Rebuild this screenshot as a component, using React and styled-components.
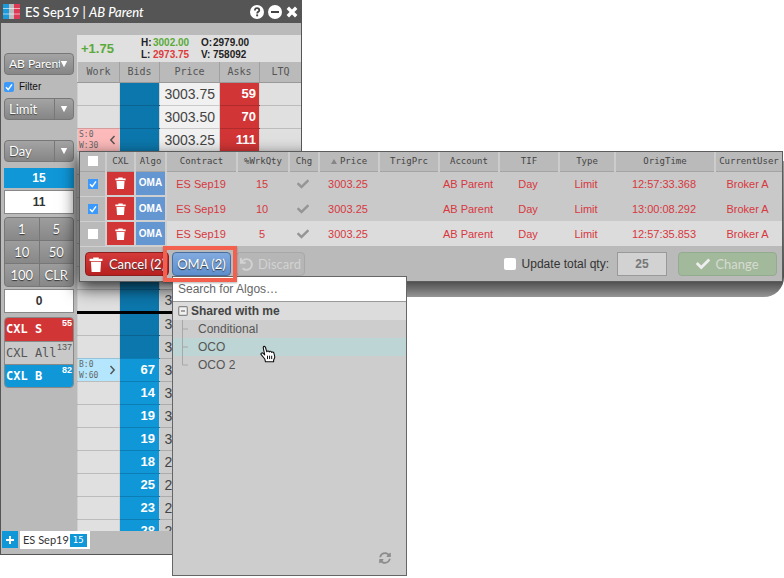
import React from "react";
import styled, { createGlobalStyle } from "styled-components";
import { FaCheck, FaUndo, FaSyncAlt } from "react-icons/fa";

const sans = '"Liberation Sans", Arial, sans-serif';
const human = 'Lato, "Open Sans", sans-serif';
const mono = '"DejaVu Sans Mono", "Liberation Mono", monospace';

const Global = createGlobalStyle`
  *, *::before, *::after { box-sizing: border-box; }
  body { margin: 0; background: #fff; overflow: hidden; font-family: ${sans}; }
  button, input, select { margin: 0; padding: 0; border: 0; border-radius: 0; font: inherit; color: inherit; }
  button { cursor: pointer; }
  table { border-collapse: collapse; border-spacing: 0; }
  th, td { padding: 0; }
`;

const Desktop = styled.main`
  position: relative;
  min-height: 100vh;
`;

/* ---------- trading window ---------- */

const Window = styled.section`
  position: relative;
  width: 302px;
  max-width: 100%;
  overflow: hidden;
  background: #bababa;
  border: 1px solid #555;
  border-top: 0;
`;

const WindowShade = styled.div`
  position: absolute;
  left: 78px;
  right: -40px;
  top: 153px;
  height: 127px;
  box-shadow: 0 6px 16px 2px rgba(0, 0, 0, 0.8);
`;

const TitleBar = styled.header`
  display: flex;
  align-items: center;
  height: 23px;
  padding: 0 3px 0 2px;
  background: #555;
  color: #fff;
`;

const Title = styled.h1`
  flex: 1;
  margin: 0 0 0 5px;
  font: 500 13px/20px ${human};
`;

const TitleButton = styled.button`
  display: flex;
  margin-left: 4px;
  background: none;
  color: #fff;
`;

const Body = styled.div`
  display: flex;
  padding-top: 12px;
`;

const Sidebar = styled.div`
  display: flex;
  flex-direction: column;
  width: 76px;
  padding: 18px 3px 0;
`;

const SelectBox = styled.span`
  position: relative;
  display: block;
  height: 22px;
  margin-bottom: ${(p) => p.$after}px;
  border: 1px solid #777;
  border-radius: 4px;
  background: linear-gradient(#a4a4a4, #868686);
  color: #fff;

  select {
    width: ${(p) => (p.$split ? 50 : 55)}px;
    height: 20px;
    padding-left: 4px;
    overflow: hidden;
    appearance: none;
    background: none;
    border-right: ${(p) => (p.$split ? "1px solid #777" : "0")};
    font: ${(p) => (p.$split ? 13 : 12)}px/20px ${human};
    text-overflow: clip;
    text-shadow: 0 1px 1px #444;
  }

  svg {
    position: absolute;
    right: 5px;
    top: 6px;
    pointer-events: none;
  }
`;

const Tick = styled.input`
  appearance: none;
  flex: none;
  display: block;
  width: ${(p) => p.$size}px;
  height: ${(p) => p.$size}px;
  border-radius: ${(p) => (p.$round ? 2 : 0)}px;
  background: #fff;

  &:checked {
    background: #3b99fc
      url("data:image/svg+xml,%3Csvg xmlns='http://www.w3.org/2000/svg' viewBox='0 0 10 10'%3E%3Cpath d='M2 5.3 4.2 7.6 8 2.4' fill='none' stroke='white' stroke-width='1.4'/%3E%3C/svg%3E")
      center / 100% 100%;
  }
`;

const FilterLabel = styled.label`
  display: flex;
  align-items: center;
  gap: 5px;
  height: 12px;
  margin-bottom: 5px;
  font: 10px/12px ${sans};
  color: #111;
`;

const QtyField = styled.input`
  width: 100%;
  height: ${(p) => (p.$active ? 20 : 24)}px;
  margin-bottom: ${(p) => p.$after}px;
  border: ${(p) => (p.$active ? "0" : "1px solid #888")};
  background: ${(p) => (p.$active ? "#1097d8" : "#fff")};
  color: ${(p) => (p.$active ? "#fff" : "#333")};
  font: bold 12px/18px ${sans};
  text-align: center;
`;

const Keypad = styled.div`
  display: grid;
  grid-template-columns: 1fr 1fr;
  gap: 1px;
  margin-bottom: 2px;
  overflow: hidden;
  border: 1px solid #777;
  border-radius: 4px;
  background: #777;
`;

const Key = styled.button`
  height: 22px;
  background: linear-gradient(#9d9d9d, #888);
  color: #fff;
  font: 13px/20px ${human};
  text-shadow: 0 1px 1px #333;
`;

const CancelStack = styled.div`
  overflow: hidden;
  margin-top: 4px;
  border: 1px solid #888;
  border-radius: 4px;
`;

const CancelKey = styled.button`
  display: flex;
  justify-content: space-between;
  width: 100%;
  height: 23px;
  padding: 1px 1px 0 1px;
  background: ${(p) => p.$bg};
  color: ${(p) => p.$fg};
  font: ${(p) => p.$weight} 12px/20px ${mono};
  text-align: left;
  white-space: nowrap;

  & + & { border-top: 1px solid #888; }

  sup { font: ${(p) => p.$weight} 9px/9px ${sans}; vertical-align: top; }
`;

const Ladder = styled.div`
  flex: 1;
  height: 496px;
  overflow: hidden;
  background: #e0e0e0;
`;

const Quote = styled.div`
  display: flex;
  align-items: center;
  height: 27px;
  padding-left: 4px;
`;

const Change = styled.strong`
  width: 60px;
  color: #5aaa3a;
  font: bold 13px/20px ${sans};
`;

const QuoteGrid = styled.dl`
  display: grid;
  grid-template-columns: 12px 48px 12px auto;
  margin: 0;
  font: bold 10px/12px ${sans};
  color: #222;

  dd { margin: 0; }
`;

const QuoteValue = styled.dd`
  color: ${(p) => p.$color || "#222"};
`;

const LadderTable = styled.table`
  width: 100%;
  table-layout: fixed;
`;

const LadderHead = styled.th`
  width: ${(p) => p.$w}px;
  height: 20px;
  border-left: 1px solid #d6d6d6;
  border-right: 1px solid #a0a0a0;
  border-bottom: 1px solid #999;
  background: #bababa;
  color: #555;
  font: 10px/18px ${mono};
`;

const tones = {
  bidDark: "#0c77ac",
  bid: "#1097d8",
  ask: "#d23535",
  price: "#f1f1f1",
  priceDim: "#cdcdcd",
  plain: "#e0e0e0",
  sell: "#fdbaba",
  buy: "#b4e6fd",
};

const LadderCell = styled.td`
  height: 23px;
  padding: 0 ${(p) => p.$pad || 0}px;
  border-bottom: ${(p) => (p.$mid ? "3px solid #000" : "1px solid rgba(0,0,0,.16)")};
  border-left: 1px solid #d0d0d0;
  background: ${(p) => tones[p.$tone]};
  color: ${(p) => (p.$strong ? "#fff" : "#444")};
  font: ${(p) => (p.$strong ? "bold 13px" : "14px")}/20px ${sans};
  text-align: right;
  white-space: nowrap;
`;

const WorkCell = styled.div`
  display: flex;
  align-items: center;
  justify-content: space-between;
  padding-right: 2px;
  color: #666;
  font: 8px/11px ${mono};
  text-align: left;
`;

const TabBar = styled.footer`
  display: flex;
  gap: 2px;
  height: 23px;
  padding-left: 1px;
  align-items: flex-start;
`;

const AddTab = styled.button`
  display: grid;
  place-items: center;
  width: 16px;
  height: 17px;
  background: #1097d8;
`;

const Tab = styled.button`
  display: flex;
  align-items: center;
  gap: 1px;
  height: 18px;
  padding: 0 3px;
  background: #fff;
  color: #333;
  font: 11px/16px ${human};
`;

const TabCount = styled.span`
  padding: 0 3px;
  background: #1097d8;
  color: #fff;
  font: 9px/13px ${mono};
`;

/* ---------- order book dialog ---------- */

const Dialog = styled.section`
  position: absolute;
  left: 79px;
  right: 1px;
  top: 151px;
  isolation: isolate;

  &::before {
    content: "";
    position: absolute;
    z-index: -1;
    left: 223px;
    right: -1px;
    top: 10px;
    bottom: -15px;
    border-bottom-right-radius: 20px;
    background: linear-gradient(#999 0, #777 60px, #4c4c4c 120px, #969696 100%);
  }
`;

const Panel = styled.div`
  border: 1px solid #5c5c5c;
  background: #bababa;
`;

const OrderTable = styled.table`
  width: 100%;
  table-layout: fixed;
`;

const OrderHead = styled.th`
  width: ${(p) => p.$w}px;
  height: 19px;
  border-right: 2px solid #ccc;
  border-bottom: 1px solid #a4a4a4;
  background: #bababa;
  color: #444;
  font: 9px/18px ${mono};
  white-space: nowrap;

  &:last-child { border-right: 0; }
  ${Tick} { margin: 0 auto; }
  svg { margin-right: 3px; }
`;

const OrderRow = styled.tr`
  background: ${(p) => (p.$selected ? "#c9c9c9" : "#dcdcdc")};
`;

const OrderCell = styled.td`
  height: 25px;
  padding-right: 2px;
  color: #d8373e;
  font: 11px/20px ${sans};
  text-align: center;
  white-space: nowrap;

  svg { display: block; margin: 0 auto; }
`;

const PickCell = styled(OrderCell)`
  padding: 0;
  border-right: 2px solid #d0d0d0;
  border-bottom: 1px solid #d0d0d0;
  background: #bababa;
  ${Tick} { margin: 0 auto; }
`;

const ActionCell = styled(OrderCell)`
  padding: 0;
  border-right: 2px solid #d0d0d0;
  border-bottom: 2px solid #d0d0d0;
  background: ${(p) => p.$bg};
`;

const CellButton = styled.button`
  display: block;
  width: 100%;
  background: none;
  color: #fff;
  font: bold 10px/20px ${sans};
`;

const Actions = styled.div`
  display: flex;
  align-items: center;
  height: 34px;
  padding: 0 5px;
`;

const ActionButton = styled.button`
  display: flex;
  align-items: center;
  gap: ${(p) => p.$gap || 0}px;
  justify-content: center;
  width: ${(p) => p.$w}px;
  height: 24px;
  border: 1px solid ${(p) => p.$edge};
  border-radius: 4px;
  background: ${(p) => p.$bg};
  color: ${(p) => p.$fg || "#fff"};
  font: 13px/20px ${human};
  text-shadow: ${(p) => (p.disabled ? "none" : "0 1px 1px #333")};
  white-space: nowrap;
`;

const AlgoPicker = styled.div`
  position: relative;
  z-index: 1;
  margin: 0 5px 0 3px;
`;

const Highlight = styled.div`
  position: absolute;
  z-index: 2;
  inset: -6px -6px -6px -9px;
  border: 4px solid #f4604e;
  box-shadow: 0 1px 2px rgba(0, 0, 0, 0.3);
  pointer-events: none;
`;

const UpdateLabel = styled.label`
  display: flex;
  align-items: center;
  gap: 6px;
  margin-left: auto;
  color: #333;
  font: 12px/20px ${sans};
`;

const TotalQty = styled.input`
  width: 50px;
  height: 24px;
  margin: 0 11px 0 8px;
  border: 1px solid #999;
  background: #d2d2d2;
  color: #777;
  font: bold 12px/20px ${sans};
  text-align: center;
`;

/* ---------- algo menu ---------- */

const Menu = styled.div`
  position: absolute;
  left: 0;
  top: 24px;
  display: flex;
  flex-direction: column;
  width: 235px;
  height: 300px;
  border: 1px solid #666;
  background: #cdcdcd;
  color: #555;
  font: 12px/18px ${sans};
`;

const Search = styled.input`
  height: 25px;
  padding-left: 5px;
  border-bottom: 1px solid #999;
  background: #fff;
  outline: 0;

  &::placeholder { color: #666; opacity: 1; }
`;

const Group = styled.button`
  display: flex;
  align-items: center;
  gap: 3px;
  height: 18px;
  padding-left: 5px;
  background: #dcdcdc;
  color: #444;
  font-weight: bold;
`;

const Tree = styled.ul`
  flex: 1;
  margin: 0;
  padding: 0;
  list-style: none;
`;

const Leaf = styled.button`
  display: flex;
  align-items: center;
  gap: 10px;
  width: 100%;
  height: 18px;
  padding-left: 9px;
  background: ${(p) => (p.$hover ? "#bdd5d4" : "none")};
  color: #555;
`;

const Refresh = styled.button`
  display: flex;
  align-self: flex-end;
  margin: 0 15px 11px 0;
  background: none;
  color: #8c8c8c;
`;

const Pointer = styled.svg`
  position: absolute;
  left: 87px;
  top: 68px;
`;

/* ---------- icons ---------- */

const Logo = () => (
  <svg width="17" height="17" viewBox="0 0 17 17" aria-hidden="true">
    <rect y="1" width="6" height="15" fill="#1a9bdc" />
    <rect x="6" y="1" width="5" height="15" fill="#bcbcbc" />
    <rect x="11" y="1" width="6" height="15" fill="#dc3a56" />
    <path d="M0 5.5h17M0 11h17" stroke="#fff" opacity=".6" />
  </svg>
);

const HelpIcon = () => (
  <svg width="14" height="14" viewBox="0 0 14 14">
    <circle cx="7" cy="7" r="7" fill="#fff" />
    <path d="M4.8 5.4C4.8 4 5.7 3.2 7 3.2s2.3.8 2.3 2c0 1.6-2.1 1.6-2.1 3.2" fill="none" stroke="#444" strokeWidth="1.8" />
    <rect x="6.2" y="9.4" width="1.9" height="1.9" fill="#444" />
  </svg>
);
const MinusIcon = () => (
  <svg width="14" height="14" viewBox="0 0 14 14">
    <circle cx="7" cy="7" r="7" fill="#fff" />
    <rect x="3" y="6" width="8" height="2" fill="#444" />
  </svg>
);
const CloseIcon = () => (
  <svg width="12" height="12" viewBox="0 0 12 12">
    <path d="m1.8 1.8 8.4 8.4m0-8.4-8.4 8.4" stroke="#fff" strokeWidth="3.4" />
  </svg>
);
const Arrow = () => (
  <svg width="8" height="8" viewBox="0 0 8 8" aria-hidden="true">
    <path d="M.8 1h6.4L4 7.2z" fill="#fff" />
  </svg>
);
const SortUp = () => (
  <svg width="6" height="5" viewBox="0 0 6 5" aria-hidden="true">
    <path d="M0 5h6L3 0z" fill="#858585" />
  </svg>
);
const Trash = ({ size = 12 }) => (
  <svg width={size - 1} height={size} viewBox="0 0 12 13" aria-hidden="true">
    <path d="M.4 1.6h3.2V.4h4.8v1.2h3.2v1.9H.4zM1.6 4.2h8.8L9.8 13H2.2z" fill="#fff" />
  </svg>
);
const Chevron = ({ left }) => (
  <svg width="7" height="10" viewBox="0 0 7 10" aria-hidden="true">
    <path d={left ? "M5.5 1 1.8 5l3.7 4" : "M1.5 1l3.7 4-3.7 4"} fill="none" stroke="#555" strokeWidth="1.5" />
  </svg>
);
const Collapse = () => (
  <svg width="10" height="10" viewBox="0 0 10 10" aria-hidden="true">
    <rect x=".7" y=".7" width="8.6" height="8.6" rx="1" fill="#f0f0f0" stroke="#888" strokeWidth="1.2" />
    <path d="M3 5h4" stroke="#555" />
  </svg>
);
const Branch = ({ last }) => (
  <svg width="6" height="18" viewBox="0 0 6 18" aria-hidden="true">
    <path d={last ? "M.5 0v9H6" : "M.5 0v18M.5 9H6"} fill="none" stroke="#a8a8a8" />
  </svg>
);
const Hand = () => (
  <Pointer width="17" height="18" viewBox="0 0 17 18" aria-hidden="true">
    <path
      d="M5.5 16.8 4.8 14 1.2 9.7C.4 8.3 2 7.3 3.2 8.4l1.5 1.4L3.3 3C3 1.1 5 .8 5.5 2.5l1.3 4.3c.2-1.1 2.1-1.1 2.4.1.5-1 2.2-.8 2.4.5.8-.8 2.3-.3 2.4 1l.7 3.1c.3 1.8-.9 2.6-1.1 3.8v1.5z"
      fill="#fff" stroke="#111" strokeWidth="1.1" strokeLinejoin="round"
    />
    <path d="M7.5 10.7v3.4M9.6 10.7v3.4M11.7 10.7v3.4" stroke="#111" />
  </Pointer>
);

/* ---------- data ---------- */

const asks = ["59", "70", "111"];
const bids = { 12: "67", 13: "14", 14: "19", 15: "19", 16: "18", 17: "25", 18: "23", 19: "28" };
const rows = Array.from({ length: 20 }, (_, i) => ({
  i,
  price: i > 2 && i < 9 ? "" : (3003.75 - i * 0.25).toFixed(2),
  ask: asks[i] || "",
  bid: bids[i] || "",
}));

const columns = [
  ["CXL", 29], ["Algo", 31], ["Contract", 71], ["%WrkQty", 52], ["Chg", 30], ["Price", 60],
  ["TrigPrc", 60], ["Account", 60], ["TIF", 60], ["Type", 56], ["OrigTime", 100], ["CurrentUser", 67],
];

const orders = [
  { qty: 15, time: "12:57:33.368", on: true },
  { qty: 10, time: "13:00:08.292", on: true },
  { qty: 5, time: "12:57:35.853", on: false },
];

const Picker = ({ label, value, split, after }) => (
  <SelectBox $split={split} $after={after}>
    <select aria-label={label} defaultValue={value}>
      <option>{value}</option>
    </select>
    <Arrow />
  </SelectBox>
);

const Working = ({ side, qty, left }) => (
  <WorkCell>
    <span>{side}<br />{qty}</span>
    <Chevron left={left} />
  </WorkCell>
);

function TradingWindow() {
  return (
    <Window>
      <TitleBar>
        <Logo />
        <Title>ES Sep19 | <em>AB Parent</em></Title>
        <TitleButton aria-label="Help"><HelpIcon /></TitleButton>
        <TitleButton aria-label="Minimize"><MinusIcon /></TitleButton>
        <TitleButton aria-label="Close"><CloseIcon /></TitleButton>
      </TitleBar>
      <Body>
        <Sidebar>
          <Picker label="Account" value="AB Parent" after={6} />
          <FilterLabel><Tick type="checkbox" defaultChecked $size={10} $round />Filter</FilterLabel>
          <Picker label="Order type" value="Limit" split after={20} />
          <Picker label="Time in force" value="Day" split after={6} />
          <QtyField aria-label="Position" defaultValue="15" $active $after={2} />
          <QtyField aria-label="Quantity" defaultValue="11" $after={3} />
          <Keypad>
            {["1", "5", "10", "50", "100", "CLR"].map((k) => <Key key={k}>{k}</Key>)}
          </Keypad>
          <QtyField aria-label="Disclosed quantity" defaultValue="0" $after={0} />
          <CancelStack>
            <CancelKey $bg="#d23535" $fg="#fff" $weight="bold">CXL S<sup>55</sup></CancelKey>
            <CancelKey $bg="#c9c9c9" $fg="#555" $weight="normal">CXL All<sup>137</sup></CancelKey>
            <CancelKey $bg="#1097d8" $fg="#fff" $weight="bold">CXL B<sup>82</sup></CancelKey>
          </CancelStack>
        </Sidebar>
        <Ladder>
          <Quote>
            <Change>+1.75</Change>
            <QuoteGrid>
              <dt>H:</dt><QuoteValue $color="#5aaa3a">3002.00</QuoteValue>
              <dt>O:</dt><QuoteValue>2979.00</QuoteValue>
              <dt>L:</dt><QuoteValue $color="#dc3c3c">2973.75</QuoteValue>
              <dt>V:</dt><QuoteValue>758092</QuoteValue>
            </QuoteGrid>
          </Quote>
          <LadderTable>
            <thead>
              <tr>
                <LadderHead $w={42}>Work</LadderHead>
                <LadderHead $w={40}>Bids</LadderHead>
                <LadderHead $w={60}>Price</LadderHead>
                <LadderHead $w={40}>Asks</LadderHead>
                <LadderHead $w={42}>LTQ</LadderHead>
              </tr>
            </thead>
            <tbody>
              {rows.map(({ i, price, ask, bid }) => (
                <tr key={i}>
                  <LadderCell $mid={i === 9} $pad={1} $tone={i === 2 ? "sell" : i === 12 ? "buy" : "plain"}>
                    {i === 2 && <Working side="S:0" qty="W:30" left />}
                    {i === 12 && <Working side="B:0" qty="W:60" />}
                  </LadderCell>
                  <LadderCell $mid={i === 9} $strong $pad={4} $tone={bid ? "bid" : "bidDark"}>{bid}</LadderCell>
                  <LadderCell $mid={i === 9} $pad={4} $tone={i < 9 ? "price" : "priceDim"}>{price}</LadderCell>
                  <LadderCell $mid={i === 9} $strong $pad={3} $tone="ask">{ask}</LadderCell>
                  <LadderCell $mid={i === 9} $tone="plain" />
                </tr>
              ))}
            </tbody>
          </LadderTable>
        </Ladder>
      </Body>
      <TabBar>
        <AddTab aria-label="Add tab">
          <svg width="8" height="8" viewBox="0 0 8 8"><path d="M4 0v8M0 4h8" stroke="#fff" strokeWidth="2" /></svg>
        </AddTab>
        <Tab>ES Sep19<TabCount>15</TabCount></Tab>
      </TabBar>
      <WindowShade />
    </Window>
  );
}

function AlgoMenu() {
  return (
    <Menu>
      <Search aria-label="Search for Algos" placeholder="Search for Algos…" />
      <Group><Collapse />Shared with me</Group>
      <Tree>
        <li><Leaf><Branch />Conditional</Leaf></li>
        <li><Leaf $hover><Branch />OCO</Leaf></li>
        <li><Leaf><Branch last />OCO 2</Leaf></li>
      </Tree>
      <Refresh aria-label="Refresh"><FaSyncAlt size={12} /></Refresh>
      <Hand />
    </Menu>
  );
}

function OrderDialog() {
  return (
    <Dialog>
      <Panel>
        <OrderTable>
          <thead>
            <tr>
              <OrderHead $w={26}><Tick type="checkbox" aria-label="Select all" $size={10} /></OrderHead>
              {columns.map(([name, w]) => (
                <OrderHead key={name} $w={w}>{name === "Price" && <SortUp />}{name}</OrderHead>
              ))}
            </tr>
          </thead>
          <tbody>
            {orders.map((o) => (
              <OrderRow key={o.time} $selected={o.on}>
                <PickCell><Tick type="checkbox" aria-label={`Select order ${o.time}`} defaultChecked={o.on} $size={10} /></PickCell>
                <ActionCell $bg="#d23535"><CellButton aria-label="Cancel order"><Trash /></CellButton></ActionCell>
                <ActionCell $bg="#6496d2"><CellButton>OMA</CellButton></ActionCell>
                <OrderCell>ES Sep19</OrderCell>
                <OrderCell>{o.qty}</OrderCell>
                <OrderCell><FaCheck size={12} color="#959595" /></OrderCell>
                <OrderCell>3003.25</OrderCell>
                <OrderCell />
                <OrderCell>AB Parent</OrderCell>
                <OrderCell>Day</OrderCell>
                <OrderCell>Limit</OrderCell>
                <OrderCell>{o.time}</OrderCell>
                <OrderCell>Broker A</OrderCell>
              </OrderRow>
            ))}
          </tbody>
        </OrderTable>
        <Actions>
          <ActionButton $w={84} $gap={6} $edge="#8c2020" $bg="linear-gradient(#d43a3a, #b82020)">
            <Trash size={15} />Cancel (2)
          </ActionButton>
          <AlgoPicker>
            <ActionButton $w={59} $edge="#4a6d9c" $bg="linear-gradient(#82aade, #5d8fce)">OMA (2)</ActionButton>
            <Highlight />
            <AlgoMenu />
          </AlgoPicker>
          <ActionButton disabled $w={69} $gap={5} $edge="#a8a8a8" $bg="#b6b6b6" $fg="#d2d2d2">
            <FaUndo size={13} />Discard
          </ActionButton>
          <UpdateLabel><Tick type="checkbox" $size={12} $round />Update total qty:</UpdateLabel>
          <TotalQty aria-label="Total quantity" defaultValue="25" />
          <ActionButton disabled $w={99} $gap={5} $edge="#93ab8e" $bg="#a3b99b" $fg="#d6dcd2">
            <FaCheck size={14} color="#eee" />Change
          </ActionButton>
        </Actions>
      </Panel>
    </Dialog>
  );
}

export default function App() {
  return (
    <Desktop>
      <Global />
      <TradingWindow />
      <OrderDialog />
    </Desktop>
  );
}
